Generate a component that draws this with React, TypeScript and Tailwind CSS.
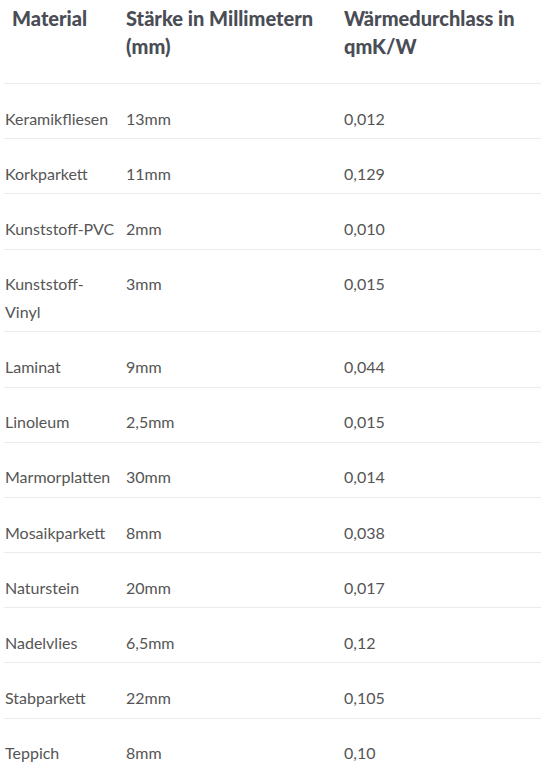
import React from "react";

const rows: [string, string, string][] = [
  ["Keramikfliesen", "13mm", "0,012"],
  ["Korkparkett", "11mm", "0,129"],
  ["Kunststoff-PVC", "2mm", "0,010"],
  ["Kunststoff-\nVinyl", "3mm", "0,015"],
  ["Laminat", "9mm", "0,044"],
  ["Linoleum", "2,5mm", "0,015"],
  ["Marmorplatten", "30mm", "0,014"],
  ["Mosaikparkett", "8mm", "0,038"],
  ["Naturstein", "20mm", "0,017"],
  ["Nadelvlies", "6,5mm", "0,12"],
  ["Stabparkett", "22mm", "0,105"],
  ["Teppich", "8mm", "0,10"],
];

export default function App() {
  return (
    <div
      className="w-[541px] h-[769px] overflow-hidden bg-white pl-[4px]"
      style={{ fontFamily: "Lato, 'Open Sans', sans-serif" }}
    >
      <div className="grid grid-cols-[118px_218px_1fr] border-b border-[#ebebeb] pt-[4px] pb-[23px] text-[20px] leading-[28px] font-black text-[#4a4d55]">
        <div className="pl-[8px]">Material</div>
        <div className="pl-[4px]">Stärke in Millimetern (mm)</div>
        <div className="pl-[4px] pr-[20px]">Wärmedurchlass in qmK/W</div>
      </div>
      {rows.map(([a, b, c]) => (
        <div
          key={a}
          className="grid grid-cols-[118px_218px_1fr] border-b border-[#ebebeb] pt-[20.6px] pb-[6px] text-[16px] leading-[27.6px] text-[#555555]"
        >
          <div className="pl-[1px] whitespace-pre-line">{a}</div>
          <div className="pl-[4px]">{b}</div>
          <div className="pl-[4px]">{c}</div>
        </div>
      ))}
    </div>
  );
}
